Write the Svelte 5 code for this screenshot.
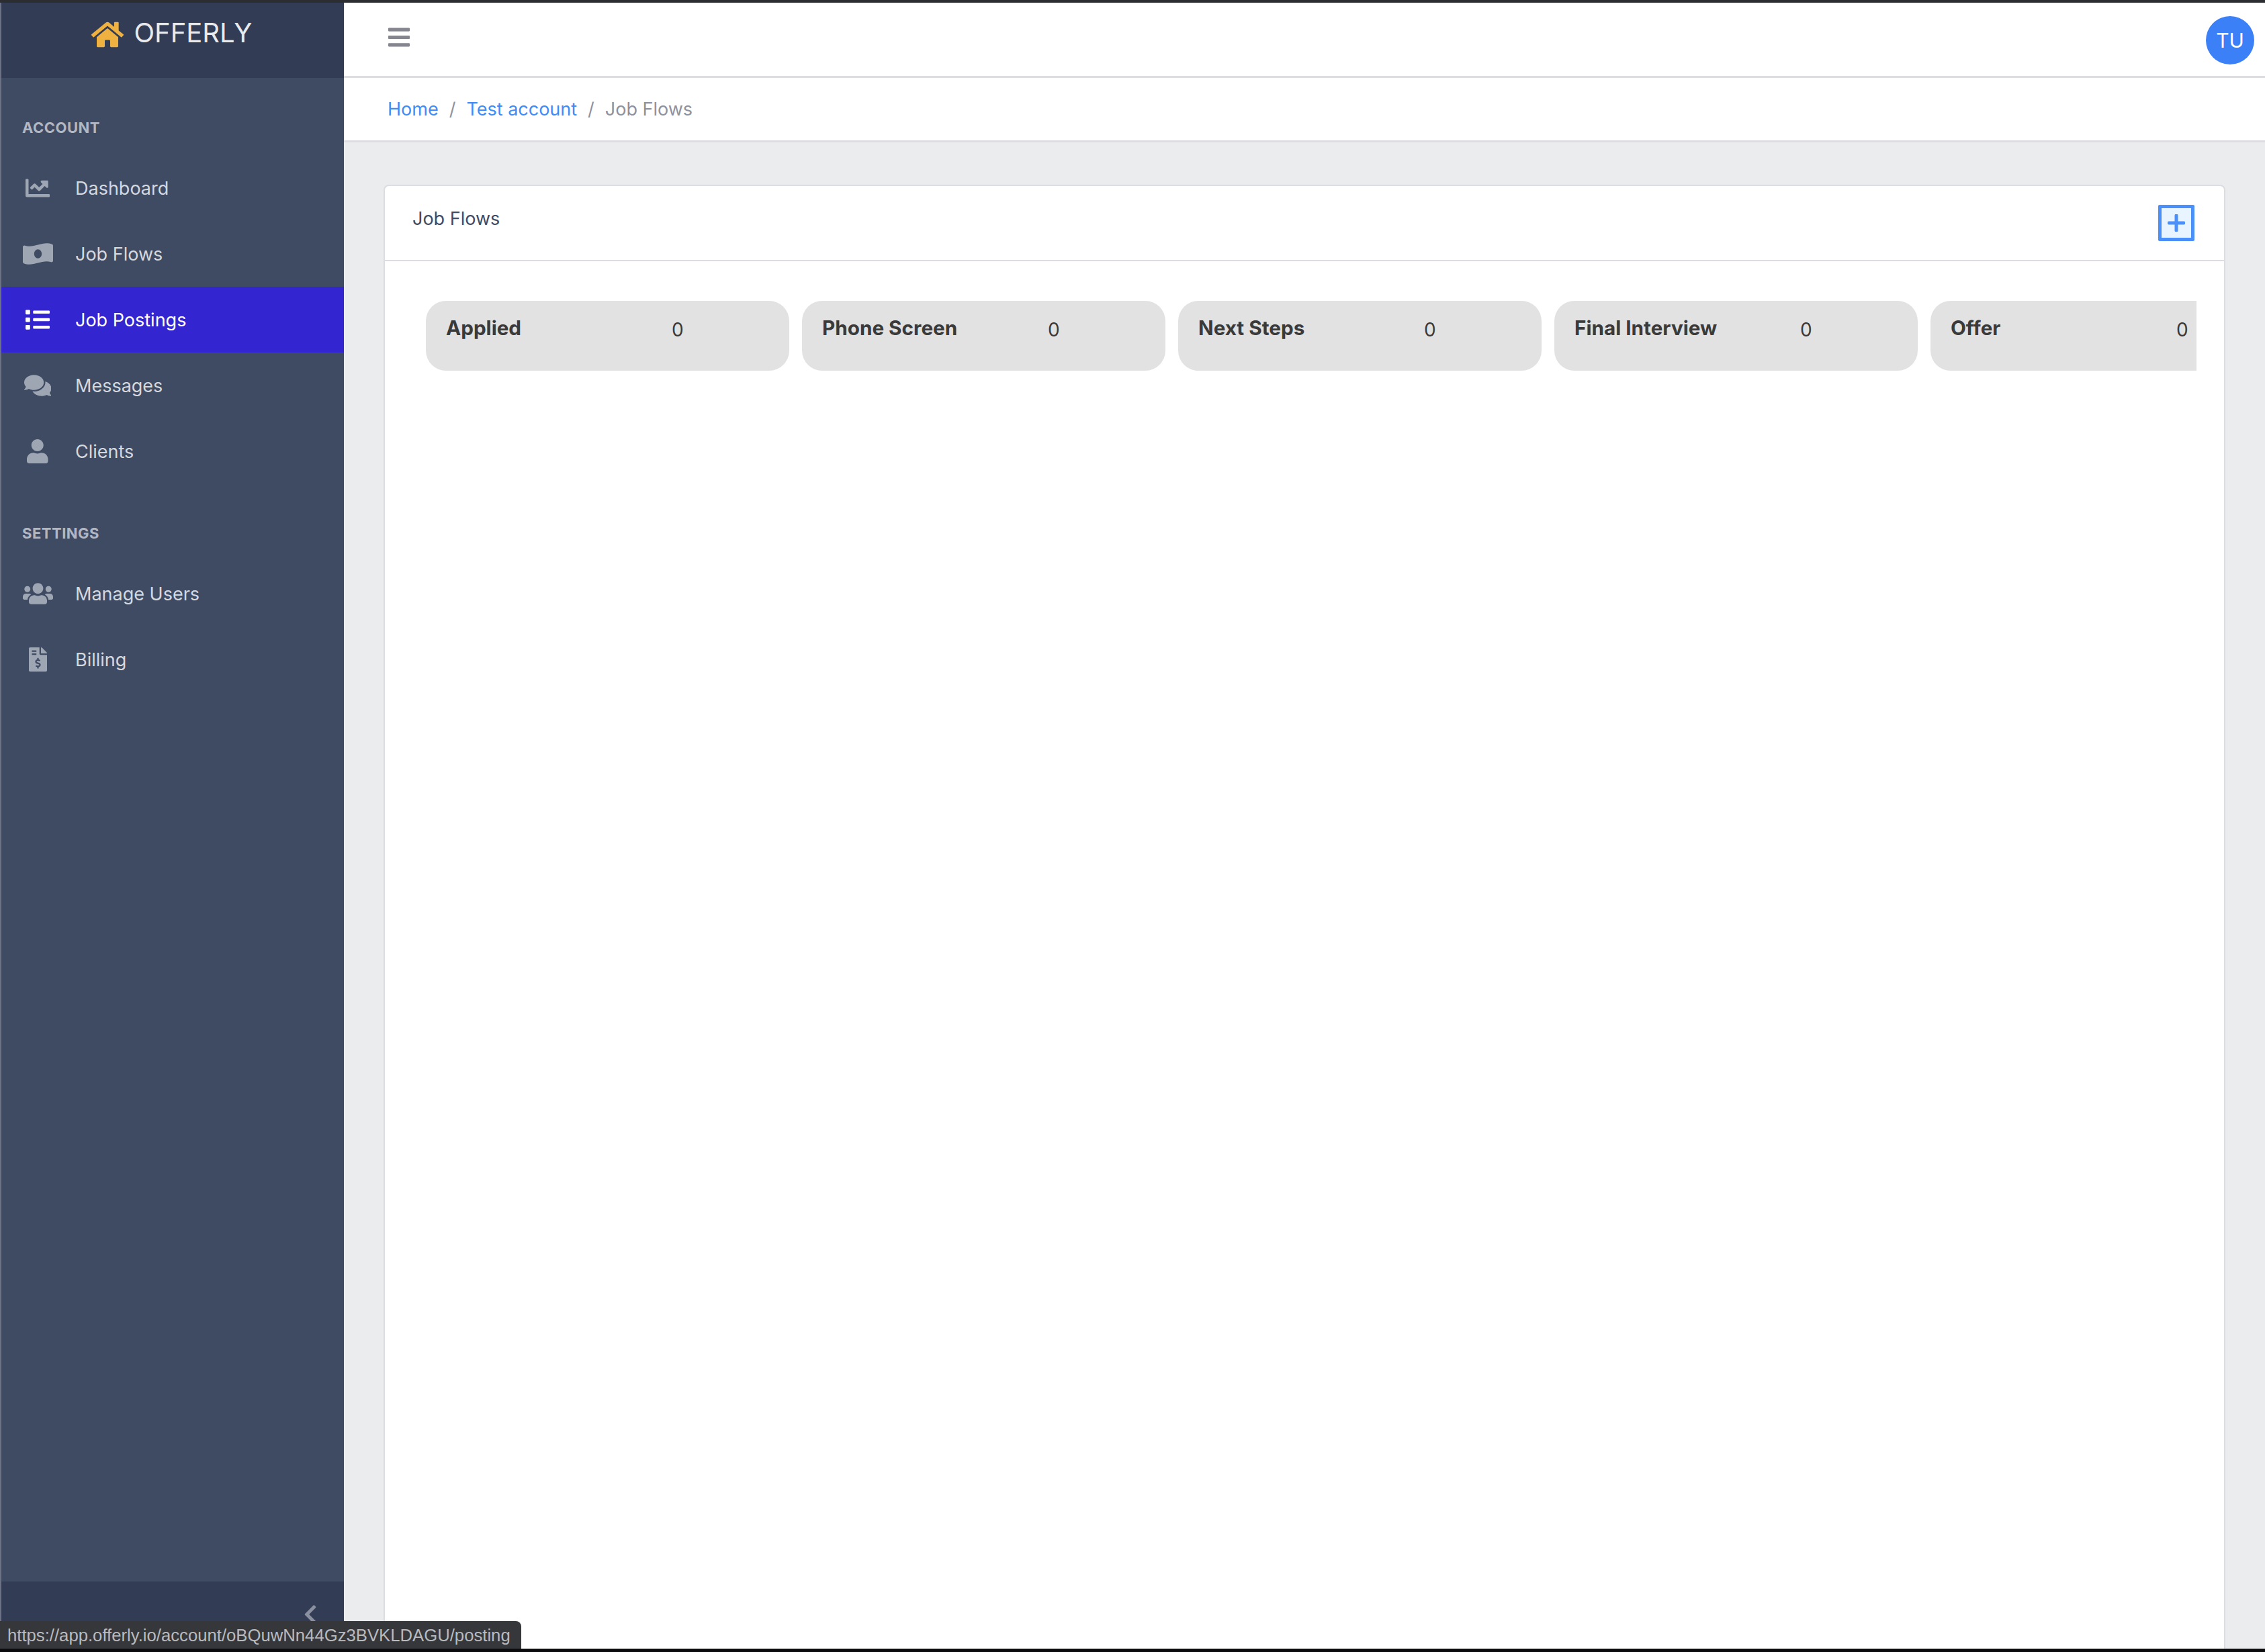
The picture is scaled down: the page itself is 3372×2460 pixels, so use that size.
<script lang="ts">
  interface NavItem {
    label: string;
    vb: string;
    d: string;
    active?: boolean;
  }

  const accountNav: NavItem[] = [
    {
      label: 'Dashboard',
      vb: '0 0 512 512',
      d: 'M496 384H64V80c0-8.84-7.16-16-16-16H16C7.16 64 0 71.16 0 80v336c0 17.67 14.33 32 32 32h464c8.84 0 16-7.16 16-16v-32c0-8.84-7.16-16-16-16zM464 96H345.94c-21.38 0-32.09 25.85-16.97 40.97l32.4 32.4L288 242.75l-73.37-73.37c-12.5-12.5-32.76-12.5-45.25 0l-68.69 68.69c-6.25 6.25-6.25 16.38 0 22.63l22.62 22.62c6.25 6.25 16.38 6.25 22.63 0L192 237.25l73.37 73.37c12.5 12.5 32.76 12.5 45.25 0l96-96 32.4 32.4c15.12 15.12 40.97 4.41 40.97-16.97V112c.01-8.84-7.15-16-15.99-16z'
    },
    {
      label: 'Job Flows',
      vb: '0 0 640 512',
      d: 'M621.16 54.46C582.37 38.19 543.55 32 504.75 32c-123.17-.01-246.33 62.34-369.5 62.34-30.89 0-61.76-3.92-92.65-13.72-3.47-1.1-6.95-1.62-10.35-1.62C15.04 79 0 92.32 0 110.81v317.26c0 12.63 7.23 24.6 18.84 29.46C57.63 473.81 96.45 480 135.25 480c123.17 0 246.34-62.35 369.51-62.35 30.89 0 61.76 3.92 92.65 13.72 3.47 1.1 6.95 1.62 10.35 1.62 17.21 0 32.25-13.32 32.25-31.81V83.93c-.01-12.64-7.24-24.6-18.85-29.47zM320 352c-44.19 0-80-42.99-80-96 0-53.02 35.82-96 80-96s80 42.98 80 96c0 53.03-35.83 96-80 96z'
    },
    {
      label: 'Job Postings',
      active: true,
      vb: '0 0 512 512',
      d: 'M80 368H16a16 16 0 0 0-16 16v64a16 16 0 0 0 16 16h64a16 16 0 0 0 16-16v-64a16 16 0 0 0-16-16zm0-320H16A16 16 0 0 0 0 64v64a16 16 0 0 0 16 16h64a16 16 0 0 0 16-16V64a16 16 0 0 0-16-16zm0 160H16a16 16 0 0 0-16 16v64a16 16 0 0 0 16 16h64a16 16 0 0 0 16-16v-64a16 16 0 0 0-16-16zm416 176H176a16 16 0 0 0-16 16v32a16 16 0 0 0 16 16h320a16 16 0 0 0 16-16v-32a16 16 0 0 0-16-16zm0-320H176a16 16 0 0 0-16 16v32a16 16 0 0 0 16 16h320a16 16 0 0 0 16-16V80a16 16 0 0 0-16-16zm0 160H176a16 16 0 0 0-16 16v32a16 16 0 0 0 16 16h320a16 16 0 0 0 16-16v-32a16 16 0 0 0-16-16z'
    },
    {
      label: 'Messages',
      vb: '0 0 576 512',
      d: 'M416 192c0-88.4-93.1-160-208-160S0 103.6 0 192c0 34.3 14.1 65.9 38 92-13.4 30.2-35.5 54.2-35.8 54.5-2.2 2.3-2.8 5.7-1.5 8.7S4.8 352 8 352c36.6 0 66.9-12.3 88.7-25 32.2 15.7 70.3 25 111.3 25 114.9 0 208-71.6 208-160zm122 220c23.9-26 38-57.7 38-92 0-66.9-53.5-124.2-129.3-148.1.9 6.6 1.3 13.3 1.3 20.1 0 105.9-107.7 192-240 192-10.8 0-21.3-.8-31.7-1.9C207.8 439.6 281.8 480 368 480c41 0 79.1-9.2 111.3-25 21.8 12.7 52.1 25 88.7 25 3.2 0 6.1-1.9 7.3-4.8 1.3-2.9.7-6.3-1.5-8.7-.3-.3-22.4-24.2-35.8-54.5z'
    },
    {
      label: 'Clients',
      vb: '0 0 448 512',
      d: 'M224 256c70.7 0 128-57.3 128-128S294.7 0 224 0 96 57.3 96 128s57.3 128 128 128zm89.6 32h-16.7c-22.2 10.2-46.9 16-72.9 16s-50.6-5.8-72.9-16h-16.7C60.2 288 0 348.2 0 422.4V464c0 26.5 21.5 48 48 48h352c26.5 0 48-21.5 48-48v-41.6c0-74.2-60.2-134.4-134.4-134.4z'
    }
  ];

  const settingsNav: NavItem[] = [
    {
      label: 'Manage Users',
      vb: '0 0 640 512',
      d: 'M96 224c35.3 0 64-28.7 64-64s-28.7-64-64-64-64 28.7-64 64 28.7 64 64 64zm448 0c35.3 0 64-28.7 64-64s-28.7-64-64-64-64 28.7-64 64 28.7 64 64 64zm32 32h-64c-17.6 0-33.5 7.1-45.1 18.6 40.3 22.1 68.9 62 75.1 109.4h66c17.7 0 32-14.3 32-32v-32c0-35.3-28.7-64-64-64zm-256 0c61.9 0 112-50.1 112-112S381.9 32 320 32 208 82.1 208 144s50.1 112 112 112zm76.8 32h-8.3c-20.8 10-43.9 16-68.5 16s-47.6-6-68.5-16h-8.3C179.6 288 128 339.6 128 403.2V432c0 26.5 21.5 48 48 48h288c26.5 0 48-21.5 48-48v-28.8c0-63.6-51.6-115.2-115.2-115.2zm-223.7-13.4C161.5 263.1 145.6 256 128 256H64c-35.3 0-64 28.7-64 64v32c0 17.7 14.3 32 32 32h65.9c6.3-47.4 34.9-87.3 75.2-109.4z'
    },
    {
      label: 'Billing',
      vb: '0 0 384 512',
      d: 'M377 105L279.1 7c-4.5-4.5-10.6-7-17-7H256v128h128v-6.1c0-6.3-2.5-12.4-7-16.9zm-153 31V0H24C10.7 0 0 10.7 0 24v464c0 13.3 10.7 24 24 24h336c13.3 0 24-10.7 24-24V160H248c-13.2 0-24-10.8-24-24zM64 72c0-4.42 3.58-8 8-8h80c4.42 0 8 3.58 8 8v16c0 4.42-3.58 8-8 8H72c-4.42 0-8-3.58-8-8V72zm0 80v-16c0-4.42 3.58-8 8-8h80c4.42 0 8 3.58 8 8v16c0 4.42-3.58 8-8 8H72c-4.42 0-8-3.58-8-8zm144 263.88V440c0 4.42-3.58 8-8 8h-16c-4.42 0-8-3.58-8-8v-24.29c-11.29-.58-22.27-4.52-31.37-11.35-3.9-2.93-4.1-8.77-.57-12.14l11.75-11.21c2.77-2.64 6.89-2.76 10.13-.73 3.87 2.42 8.26 3.72 12.82 3.72h28.11c6.5 0 11.8-5.92 11.8-13.19 0-5.95-3.61-11.19-8.77-12.73l-45-13.5c-18.59-5.58-31.58-23.42-31.58-43.39 0-24.52 19.05-44.44 42.67-45.07V232c0-4.42 3.58-8 8-8h16c4.42 0 8 3.58 8 8v24.29c11.29.58 22.27 4.51 31.37 11.35 3.9 2.93 4.1 8.77.57 12.14l-11.75 11.21c-2.77 2.64-6.89 2.76-10.13.73-3.87-2.43-8.26-3.72-12.82-3.72h-28.11c-6.5 0-11.8 5.92-11.8 13.19 0 5.95 3.61 11.19 8.77 12.73l45 13.5c18.59 5.58 31.58 23.42 31.58 43.39 0 24.53-19.05 44.44-42.67 45.07z'
    }
  ];

  const stages = ['Applied', 'Phone Screen', 'Next Steps', 'Final Interview', 'Offer'];
</script>

{#snippet navRow(item: NavItem)}
  <a class="nav-row" class:active={item.active} href="#top">
    <span class="nav-icon">
      <svg viewBox={item.vb} aria-hidden="true"><path d={item.d} /></svg>
    </span>
    <span>{item.label}</span>
  </a>
{/snippet}

<div class="screen">
  <div class="strip-top"></div>

  <div class="app">
    <aside class="sidebar">
      <div class="brand">
        <svg class="brand-icon" viewBox="0 0 576 512" aria-hidden="true">
          <path d="M280.37 148.26L96 300.11V464a16 16 0 0 0 16 16l112.06-.29a16 16 0 0 0 15.92-16V368a16 16 0 0 1 16-16h64a16 16 0 0 1 16 16v95.64a16 16 0 0 0 16 16.05L464 480a16 16 0 0 0 16-16V300L295.67 148.26a12.19 12.19 0 0 0-15.3 0zM571.6 251.47L488 182.56V44.05a12 12 0 0 0-12-12h-56a12 12 0 0 0-12 12v72.61L318.47 43a48 48 0 0 0-61 0L4.34 251.47a12 12 0 0 0-1.6 16.9l25.5 31A12 12 0 0 0 45.15 301l235.22-193.74a12.19 12.19 0 0 1 15.3 0L530.9 301a12 12 0 0 0 16.9-1.6l25.5-31a12 12 0 0 0-1.7-16.93z" />
        </svg>
        <span>OFFERLY</span>
      </div>

      <nav class="nav">
        <div class="nav-title">Account</div>
        {#each accountNav as item}
          {@render navRow(item)}
        {/each}
        <div class="nav-title">Settings</div>
        {#each settingsNav as item}
          {@render navRow(item)}
        {/each}
      </nav>

      <div class="side-foot">
        <svg viewBox="0 0 320 512" aria-hidden="true">
          <path d="M34.52 239.03L228.87 44.69c9.37-9.37 24.57-9.37 33.94 0l22.67 22.67c9.36 9.36 9.37 24.52.04 33.9L131.49 256l154.02 154.75c9.34 9.38 9.32 24.54-.04 33.9l-22.67 22.67c-9.37 9.37-24.57 9.37-33.94 0L34.52 273c-9.37-9.37-9.37-24.57 0-33.97z" />
        </svg>
      </div>
    </aside>

    <main class="main">
      <header class="topbar">
        <svg class="burger" viewBox="0 0 448 512" aria-hidden="true">
          <path d="M16 132h416c8.837 0 16-7.163 16-16V76c0-8.837-7.163-16-16-16H16C7.163 60 0 67.163 0 76v40c0 8.837 7.163 16 16 16zm0 160h416c8.837 0 16-7.163 16-16v-40c0-8.837-7.163-16-16-16H16c-8.837 0-16 7.163-16 16v40c0 8.837 7.163 16 16 16zm0 160h416c8.837 0 16-7.163 16-16v-40c0-8.837-7.163-16-16-16H16c-8.837 0-16 7.163-16 16v40c0 8.837 7.163 16 16 16z" />
        </svg>
        <div class="avatar">TU</div>
      </header>

      <div class="crumbs">
        <a href="#top">Home</a>
        <span class="sep">/</span>
        <a href="#top">Test account</a>
        <span class="sep">/</span>
        <span class="current">Job Flows</span>
      </div>

      <div class="content">
        <section class="card">
          <div class="card-head">
            <span class="card-title">Job Flows</span>
            <button class="add" aria-label="Add">
              <svg viewBox="0 0 26 26" aria-hidden="true">
                <path d="M13 2v22M2 13h22" />
              </svg>
            </button>
          </div>
          <div class="board">
            {#each stages as stage}
              <div class="stage">
                <span class="stage-name">{stage}</span>
                <span class="stage-count">0</span>
              </div>
            {/each}
          </div>
        </section>
      </div>
    </main>
  </div>

  <div class="strip-bottom"></div>
  <div class="status-url">https://app.offerly.io/account/oBQuwNn44Gz3BVKLDAGU/posting</div>
</div>

<style>
  :global(body) {
    margin: 0;
    background: #ebecee;
  }

  .screen {
    position: relative;
    width: 3372px;
    height: 2460px;
    display: flex;
    flex-direction: column;
    overflow: hidden;
    font-family: Inter, 'Liberation Sans', sans-serif;
    font-size: 27px;
  }

  .strip-top {
    height: 4px;
    background: #2c2d30;
    flex: none;
  }

  .strip-bottom {
    height: 5px;
    background: #0c0c0e;
    flex: none;
  }

  .app {
    flex: 1;
    min-height: 0;
    display: flex;
  }

  .sidebar {
    width: 510px;
    flex: none;
    display: flex;
    flex-direction: column;
    background: #3f4b63;
    border-left: 2px solid #6c7283;
  }

  .brand {
    height: 112px;
    flex: none;
    box-sizing: border-box;
    display: flex;
    justify-content: center;
    gap: 15px;
    padding: 26px 2px 0 0;
    background: #323c55;
    color: #e8eaee;
    font-size: 40px;
    line-height: 38px;
  }

  .brand-icon {
    width: 48px;
    height: 43px;
    fill: #efb13f;
  }

  .nav {
    flex: 1;
    padding-top: 1px;
  }

  .nav-title {
    padding: 56px 33px 24px 31px;
    font-size: 22px;
    line-height: 34px;
    font-weight: 700;
    letter-spacing: 0.5px;
    text-transform: uppercase;
    color: #b3b7c2;
  }

  .nav-row {
    display: flex;
    align-items: center;
    height: 98px;
    padding-left: 31.5px;
    color: #d5d8df;
    text-decoration: none;
  }

  .nav-row.active {
    background: #3325d0;
    color: #fff;
  }

  .nav-icon {
    width: 45px;
    margin-right: 33.5px;
    display: flex;
    justify-content: center;
  }

  .nav-icon svg {
    height: 36px;
    fill: #9ea5b3;
  }

  .active .nav-icon svg {
    fill: #fff;
  }

  .side-foot {
    height: 100px;
    flex: none;
    box-sizing: border-box;
    padding: 33px 40px 0 0;
    display: flex;
    justify-content: flex-end;
    background: #323c55;
  }

  .side-foot svg {
    width: 20px;
    height: 32px;
    fill: #8a90a0;
  }

  .main {
    flex: 1;
    min-width: 0;
    display: flex;
    flex-direction: column;
    background: #ebecee;
  }

  .topbar {
    height: 112px;
    flex: none;
    box-sizing: border-box;
    display: flex;
    align-items: flex-start;
    justify-content: space-between;
    padding: 20px 16px 0 66px;
    background: #fff;
    border-bottom: 3px solid #dcdce2;
  }

  .burger {
    width: 32px;
    height: 37px;
    margin-top: 13px;
    fill: #84858f;
  }

  .avatar {
    width: 72px;
    height: 72px;
    border-radius: 50%;
    display: flex;
    align-items: center;
    justify-content: center;
    background: #3b80f6;
    color: #fff;
    font-size: 30px;
  }

  .crumbs {
    height: 96px;
    flex: none;
    box-sizing: border-box;
    display: flex;
    align-items: center;
    padding: 0 0 1px 65px;
    background: #fff;
    border-bottom: 3px solid #dcdce2;
  }

  .crumbs a {
    color: #3f8cf6;
    text-decoration: none;
  }

  .sep {
    margin: 0 16px;
    color: #8d92a0;
  }

  .current {
    color: #8d92a0;
  }

  .content {
    flex: 1;
    min-height: 0;
    padding: 63px 59px 0 59px;
  }

  .card {
    box-sizing: border-box;
    height: 100%;
    background: #fff;
    border: 2px solid #dcdde2;
    border-bottom: none;
    border-radius: 8px 8px 0 0;
  }

  .card-head {
    height: 112px;
    box-sizing: border-box;
    display: flex;
    justify-content: space-between;
    padding: 28px 44px 0 41px;
    border-bottom: 2px solid #dcdde2;
    color: #3f4b63;
  }

  .card-title {
    line-height: 38px;
    padding-top: 2px;
  }

  .add {
    width: 54px;
    height: 54px;
    box-sizing: border-box;
    margin: 0;
    padding: 0;
    display: flex;
    align-items: center;
    justify-content: center;
    background: #e8f4ff;
    border: 5px solid #4a90f8;
    border-radius: 2px;
  }

  .add svg {
    width: 26px;
    height: 26px;
    fill: none;
    stroke: #4a90f8;
    stroke-width: 5;
    stroke-linecap: round;
  }

  .board {
    display: flex;
    gap: 19.5px;
    margin: 59px 41px 0 61px;
    overflow: hidden;
  }

  .stage {
    flex: 0 0 540.5px;
    height: 104px;
    box-sizing: border-box;
    display: flex;
    padding: 21px 0 0 30px;
    background: #e2e2e2;
    border-radius: 30px;
    color: #3a3a3a;
    line-height: 38px;
  }

  .stage-name {
    width: 336px;
    font-size: 29.7px;
    font-weight: 700;
  }

  .stage-count {
    font-size: 28px;
    margin-top: 3px;
  }

  .status-url {
    position: absolute;
    left: 0;
    bottom: 5px;
    width: 776px;
    height: 41px;
    box-sizing: border-box;
    padding: 1px 0 0 11px;
    background: #36373b;
    border-radius: 0 8px 0 0;
    color: #b9babd;
    font-family: 'Liberation Sans', sans-serif;
    font-size: 25.7px;
    line-height: 41px;
    white-space: nowrap;
  }
</style>
